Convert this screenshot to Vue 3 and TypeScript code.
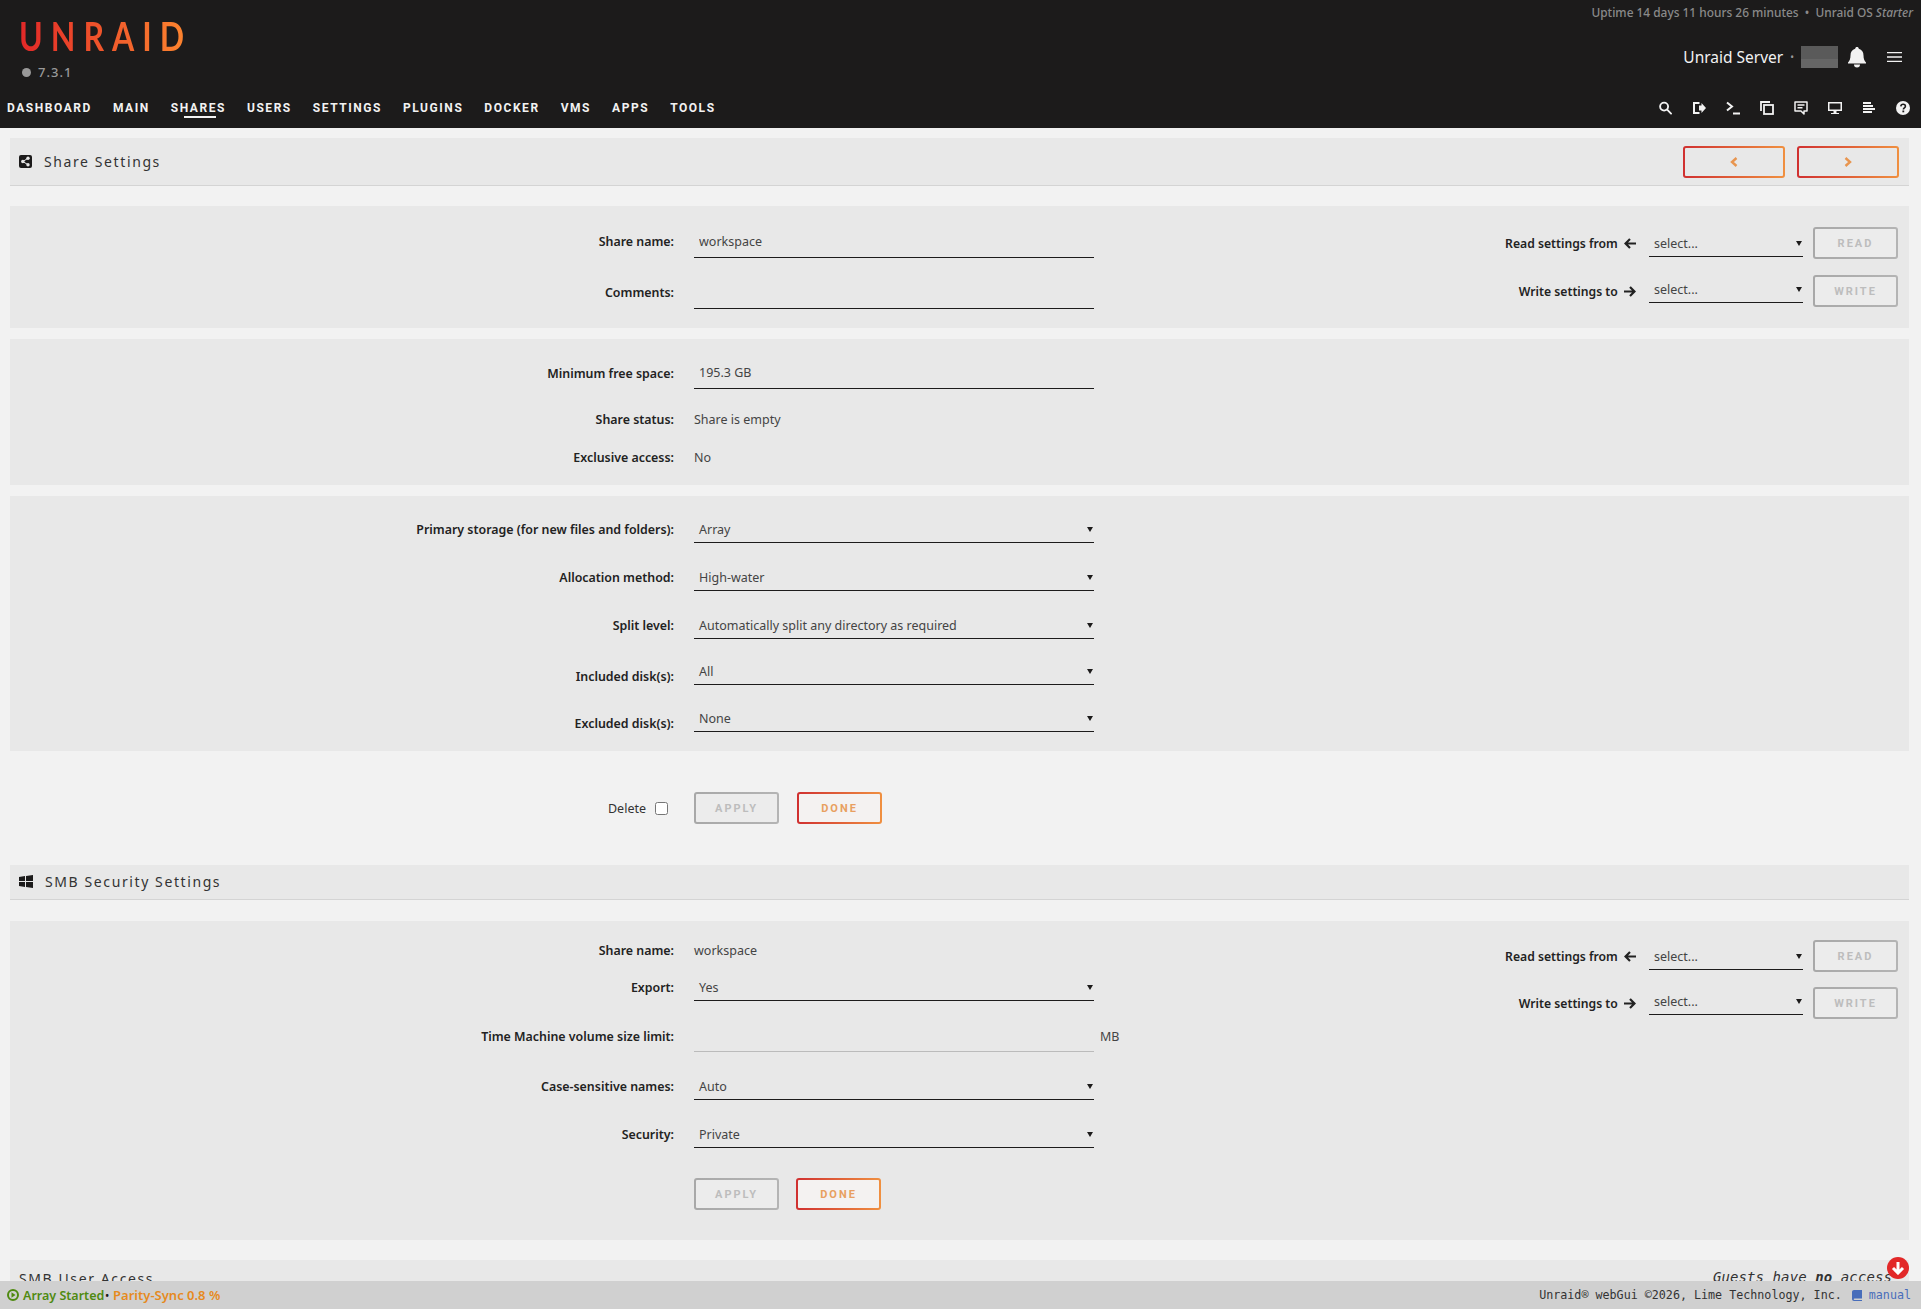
<script setup lang="ts">
interface Row {
  label: string
  kind: 'input' | 'select' | 'text'
  value: string
  h: number
  unit?: string
  raised?: boolean
}

const navItems = ['Dashboard', 'Main', 'Shares', 'Users', 'Settings', 'Plugins', 'Docker', 'VMs', 'Apps', 'Tools']

const nameRows: Row[] = [
  { label: 'Share name:', kind: 'input', value: 'workspace', h: 51 },
  { label: 'Comments:', kind: 'input', value: '', h: 51 },
]

const spaceRows: Row[] = [
  { label: 'Minimum free space:', kind: 'input', value: '195.3 GB', h: 52 },
  { label: 'Share status:', kind: 'text', value: 'Share is empty', h: 40 },
  { label: 'Exclusive access:', kind: 'text', value: 'No', h: 36 },
]

const storageRows: Row[] = [
  { label: 'Primary storage (for new files and folders):', kind: 'select', value: 'Array', h: 48 },
  { label: 'Allocation method:', kind: 'select', value: 'High-water', h: 48 },
  { label: 'Split level:', kind: 'select', value: 'Automatically split any directory as required', h: 48 },
  { label: 'Included disk(s):', kind: 'select', value: 'All', h: 54, raised: true },
  { label: 'Excluded disk(s):', kind: 'select', value: 'None', h: 40, raised: true },
]

const smbRows: Row[] = [
  { label: 'Share name:', kind: 'text', value: 'workspace', h: 34 },
  { label: 'Export:', kind: 'select', value: 'Yes', h: 40 },
  { label: 'Time Machine volume size limit:', kind: 'input', value: '', h: 58, unit: 'MB' },
  { label: 'Case-sensitive names:', kind: 'select', value: 'Auto', h: 42 },
  { label: 'Security:', kind: 'select', value: 'Private', h: 54 },
]

const panels = [
  { rows: nameRows, copy: true, cls: 'panel-name' },
  { rows: spaceRows, copy: false, cls: 'panel-space' },
  { rows: storageRows, copy: false, cls: 'panel-storage' },
]
</script>

<template>
  <div class="page">
    <header class="top">
      <div class="top-main">
        <div class="brand">
          <div class="logo">UNRAID</div>
          <div class="version"><span class="version-dot"></span>7.3.1</div>
        </div>
        <div class="top-right">
          <div class="uptime">Uptime 14 days 11 hours 26 minutes &nbsp;•&nbsp; Unraid OS <em>Starter</em></div>
          <div class="server">
            <span class="server-name">Unraid Server</span>
            <span class="server-dot">•</span>
            <span class="server-ip"></span>
            <svg class="bell" width="18" height="21" viewBox="0 0 18 21" fill="#f2f2f2">
              <path d="M9 0c1 0 1.700.7 1.800 1.700C14 2.500 15.500 5 15.500 8.500c0 3.500 1 5.300 2.500 7v1H0v-1c1.500-1.700 2.500-3.500 2.500-7C2.500 5 4 2.500 7.200 1.700 7.300.7 8 0 9 0z" />
              <path d="M6 17.500h6a3 3 0 0 1-6 0z" />
            </svg>
            <svg class="burger" width="15" height="10" viewBox="0 0 15 10" stroke="#f2f2f2" stroke-width="1.300">
              <path d="M0 .7h15M0 5h15M0 9.300h15" />
            </svg>
          </div>
        </div>
      </div>
      <div class="top-nav">
        <nav class="nav">
          <a v-for="item in navItems" :key="item" :class="['nav-item', { active: item === 'Shares' }]">{{ item }}</a>
        </nav>
        <div class="tools">
          <svg width="13" height="14" viewBox="0 0 14 14" fill="none" stroke="#f2f2f2" stroke-width="2"><circle cx="5.500" cy="5.500" r="4.300" /><path d="M8.800 8.800 13 13" stroke-linecap="round" /></svg>
          <svg width="14" height="14" viewBox="0 0 14 14" fill="#f2f2f2"><path d="M1 1h6.500v2H3v8h4.500v2H1z" /><path d="M7 4.500h2.500V2L14 7l-4.500 5V9.500H7z" /></svg>
          <svg width="14" height="14" viewBox="0 0 14 14" fill="none" stroke="#f2f2f2" stroke-width="2"><path d="m1 1.500 5 4-5 4" /><path d="M7 12.500h7" /></svg>
          <svg width="14" height="14" viewBox="0 0 14 14" fill="none" stroke="#f2f2f2" stroke-width="1.800"><path d="M1 10V1h9" /><rect x="4" y="4" width="9" height="9" /></svg>
          <svg width="14" height="14" viewBox="0 0 14 14" fill="none" stroke="#f2f2f2" stroke-width="1.500"><path d="M1 1h12v9h-3v3l-3-3H1z" stroke-linejoin="round" /><path d="M3.500 4h7M3.500 6.800h5" /></svg>
          <svg width="14" height="14" viewBox="0 0 14 14" fill="#f2f2f2"><path d="M0 1h14v9H8.500v2H11v1H3v-1h2.500v-2H0zm1.500 1.500v6h11v-6z" fill-rule="evenodd" /></svg>
          <svg width="14" height="14" viewBox="0 0 14 14" fill="#f2f2f2"><path d="M1 1h8v2H1zM1 4h10v2H1zM1 7h12v2H1zM1 10h9v2H1z" /></svg>
          <svg width="14" height="14" viewBox="0 0 14 14"><circle cx="7" cy="7" r="7" fill="#f2f2f2" /><path d="M4.800 5.300C5 3.900 6 3.300 7.100 3.300c1.300 0 2.300.8 2.300 2 0 1.700-2 1.600-2 3.200" fill="none" stroke="#1c1b1b" stroke-width="1.600" /><rect x="6.400" y="9.500" width="1.800" height="1.800" fill="#1c1b1b" /></svg>
        </div>
      </div>
    </header>

    <main class="content">
      <section class="title title-first">
        <span class="title-text">
          <svg width="13" height="13" viewBox="0 0 13 13"><rect width="13" height="13" rx="2" fill="#1c1b1b" /><circle cx="9" cy="3.300" r="1.700" fill="#e8e8e8" /><circle cx="9" cy="9.700" r="1.700" fill="#e8e8e8" /><circle cx="3.800" cy="6.500" r="1.700" fill="#e8e8e8" /><path d="M9 3.300 3.800 6.500 9 9.700" stroke="#e8e8e8" fill="none" /></svg>
          Share Settings
        </span>
        <span class="title-buttons">
          <button class="btn btn-page">
            <svg width="8" height="10" viewBox="0 0 8 10" fill="none" stroke="#e8954f" stroke-width="2.400"><path d="M6.500 1 2 5l4.500 4" /></svg>
          </button>
          <button class="btn btn-page">
            <svg width="8" height="10" viewBox="0 0 8 10" fill="none" stroke="#e8954f" stroke-width="2.400"><path d="M1.500 1 6 5 1.500 9" /></svg>
          </button>
        </span>
      </section>

      <section v-for="panel in panels" :key="panel.cls" :class="['panel', panel.cls]">
        <div class="form">
          <div v-for="row in panel.rows" :key="row.label" class="row" :style="{ height: row.h + 'px' }">
            <label class="row-label">{{ row.label }}</label>
            <div v-if="row.kind === 'text'" class="row-text">{{ row.value }}</div>
            <input v-else-if="row.kind === 'input'" class="field field-input" type="text" :value="row.value" />
            <div v-else :class="['field', 'field-select', { raised: row.raised }]">{{ row.value }}</div>
          </div>
        </div>
        <div v-if="panel.copy" class="copy">
          <div class="copy-row">
            <span class="copy-label">Read settings from
              <svg width="12" height="11" viewBox="0 0 12 11" fill="none" stroke="#222" stroke-width="2.200"><path d="M6 1 1.500 5.500 6 10M2 5.500h10" /></svg>
            </span>
            <div class="field field-select copy-select">select...</div>
            <button class="btn btn-off btn-copy" disabled>Read</button>
          </div>
          <div class="copy-row">
            <span class="copy-label">Write settings to
              <svg width="12" height="11" viewBox="0 0 12 11" fill="none" stroke="#222" stroke-width="2.200"><path d="M6 1l4.500 4.500L6 10M0 5.500h10" /></svg>
            </span>
            <div class="field field-select copy-select raised-small">select...</div>
            <button class="btn btn-off btn-copy" disabled>Write</button>
          </div>
        </div>
      </section>

      <div class="actions">
        <label class="delete">Delete <input type="checkbox" /></label>
        <div class="action-btns">
          <button class="btn btn-off btn-action" disabled>Apply</button>
          <button class="btn btn-on btn-action">Done</button>
        </div>
      </div>

      <section class="title title-smb">
        <span class="title-text">
          <svg width="14" height="13" viewBox="0 0 14 13" fill="#1c1b1b"><path d="M0 2 6 1v5H0zM7 .9 14 0v6H7zM0 7h6v5l-6-1zM7 7h7v6l-7-1z" /></svg>
          SMB Security Settings
        </span>
      </section>

      <section class="panel panel-smb">
        <div class="form">
          <div v-for="row in smbRows" :key="row.label" class="row" :style="{ height: row.h + 'px' }">
            <label class="row-label">{{ row.label }}</label>
            <div v-if="row.kind === 'text'" class="row-text">{{ row.value }}</div>
            <input v-else-if="row.kind === 'input'" class="field field-input field-faint" type="text" :value="row.value" />
            <div v-else class="field field-select">{{ row.value }}</div>
            <span v-if="row.unit" class="unit">{{ row.unit }}</span>
          </div>
          <div class="smb-actions">
            <button class="btn btn-off btn-action" disabled>Apply</button>
            <button class="btn btn-on btn-action">Done</button>
          </div>
        </div>
        <div class="copy copy-smb">
          <div class="copy-row">
            <span class="copy-label">Read settings from
              <svg width="12" height="11" viewBox="0 0 12 11" fill="none" stroke="#222" stroke-width="2.200"><path d="M6 1 1.500 5.500 6 10M2 5.500h10" /></svg>
            </span>
            <div class="field field-select copy-select">select...</div>
            <button class="btn btn-off btn-copy" disabled>Read</button>
          </div>
          <div class="copy-row">
            <span class="copy-label">Write settings to
              <svg width="12" height="11" viewBox="0 0 12 11" fill="none" stroke="#222" stroke-width="2.200"><path d="M6 1l4.500 4.500L6 10M0 5.500h10" /></svg>
            </span>
            <div class="field field-select copy-select raised-small">select...</div>
            <button class="btn btn-off btn-copy" disabled>Write</button>
          </div>
        </div>
      </section>

      <section class="panel-next">
        <span class="next-title">SMB User Access</span>
        <span class="next-note">Guests have <b>no</b> access</span>
      </section>
    </main>

    <div class="scroll-down">
      <svg width="14" height="14" viewBox="0 0 14 14" fill="none" stroke="#fff" stroke-width="3"><path d="M7 1v10M2 7l5 5 5-5" /></svg>
    </div>

    <footer class="footer">
      <div class="footer-left">
        <svg width="12" height="12" viewBox="0 0 12 12"><circle cx="6" cy="6" r="5" fill="none" stroke="#4f8a10" stroke-width="2" /><path d="M4.500 3.300 8.500 6l-4 2.700z" fill="#4f8a10" /></svg>
        <span class="array-ok">Array Started</span><span class="footer-dot">•</span>
        <span class="parity">Parity-Sync 0.8 %</span>
      </div>
      <div class="footer-right">
        <span>Unraid® webGui ©2026, Lime Technology, Inc.</span>
        <a class="manual">
          <svg width="10" height="11" viewBox="0 0 10 11" fill="#486dba"><path d="M2 0h8v8.500H2.500c-.5 0-.8.3-.8.700s.3.800.8.800H10v1H2C.9 11 0 10.200 0 9V2C0 .9.900 0 2 0z" /></svg>
          manual
        </a>
      </div>
    </footer>
  </div>
</template>

<style>
html,
body {
  margin: 0;
  height: 100%;
  overflow: hidden;
  background: #f2f2f2;
}
</style>

<style scoped>
.page {
  font-family: "Noto Sans", Roboto, sans-serif;
  font-size: 12.5px;
  color: #1c1b1b;
  height: 1309px;
  overflow: hidden;
  position: relative;
}

/* header */
.top {
  height: 128px;
  background: #1c1b1b;
  display: flex;
  flex-direction: column;
}

.top-main {
  display: flex;
  justify-content: space-between;
  height: 95px;
}

.brand {
  padding: 15px 0 0 19px;
}

.logo {
  font-family: Lato, sans-serif;
  font-size: 40px;
  font-weight: 700;
  line-height: 42px;
  letter-spacing: 10px;
  width: 226px;
  transform: scaleX(0.8);
  transform-origin: left;
  background: linear-gradient(90deg, #e22828, #ff8c2f);
  -webkit-background-clip: text;
  background-clip: text;
  color: transparent;
}

.version {
  display: flex;
  align-items: center;
  gap: 7px;
  margin: 6px 0 0 3px;
  color: #999;
  font-size: 13px;
  font-weight: 500;
  letter-spacing: 1px;
}

.version-dot {
  width: 9px;
  height: 9px;
  border-radius: 50%;
  background: #999;
}

.top-right {
  display: flex;
  flex-direction: column;
  align-items: flex-end;
  padding: 5px 8px 0 0;
}

.uptime {
  font-size: 11.9px;
  line-height: 15px;
  color: #8a8a8a;
  font-weight: 500;
}

.server {
  display: flex;
  align-items: center;
  margin-top: 24px;
  padding-right: 11px;
  height: 26px;
}

.server-name {
  font-size: 15.5px;
  color: #f2f2f2;
}

.server-dot {
  color: #999;
  font-size: 10px;
  margin: 0 7px;
}

.server-ip {
  width: 37px;
  height: 22px;
  background: linear-gradient(#5a5a5a 0 60%, #666 60%);
}

.bell {
  margin-left: 10px;
}

.burger {
  margin-left: 21px;
}

.top-nav {
  display: flex;
  justify-content: space-between;
  align-items: center;
  height: 26px;
}

.nav {
  display: flex;
  gap: 21px;
  padding-left: 7px;
}

.nav-item {
  position: relative;
  font-family: Roboto, sans-serif;
  font-size: 12px;
  font-weight: 700;
  letter-spacing: 1.55px;
  text-transform: uppercase;
  color: #f2f2f2;
}

.nav-item.active::after {
  content: "";
  position: absolute;
  left: 13px;
  right: 10px;
  bottom: -3px;
  height: 2px;
  background: #f2f2f2;
}

.tools {
  display: flex;
  gap: 20px;
  padding-right: 11px;
}

/* sections */
.content {
  padding: 10px 12px 0 10px;
}

.title {
  display: flex;
  justify-content: space-between;
  align-items: center;
  background: #e8e8e8;
  border-bottom: 1px solid #d4d4d4;
  box-sizing: border-box;
  padding: 0 10px 0 9px;
}

.title-first {
  height: 48px;
  margin-bottom: 20px;
}

.title-smb {
  height: 35px;
  padding-bottom: 2px;
  margin-bottom: 21px;
}

.title-text {
  display: flex;
  align-items: center;
  gap: 12px;
  font-size: 14px;
  letter-spacing: 1.6px;
  color: #333;
}

.title-buttons {
  display: flex;
  gap: 12px;
}

.panel {
  display: flex;
  background: #e8e8e8;
  margin-bottom: 11px;
  padding-right: 11px;
  box-sizing: border-box;
}

.panel-name {
  height: 122px;
  padding-top: 10px;
}

.panel-space {
  height: 146px;
  padding-top: 8px;
}

.panel-storage {
  height: 255px;
  padding-top: 9px;
  margin-bottom: 41px;
}

.panel-smb {
  height: 319px;
  padding-top: 12px;
  margin-bottom: 20px;
}

.form {
  flex: 1;
}

.row {
  display: flex;
  align-items: center;
}

.row-label {
  width: 664px;
  text-align: right;
  font-size: 12.4px;
  font-weight: 600;
  margin-right: 20px;
  flex-shrink: 0;
  color: #222;
}

.row-text {
  color: #444;
}

.field {
  box-sizing: border-box;
  width: 400px;
  border: 0;
  border-bottom: 1px solid #1c1b1b;
  background: transparent;
  font: inherit;
  color: #444;
  padding: 0 5px;
  outline: none;
}

.field-input {
  height: 32px;
}

.field-faint {
  border-bottom-color: #bbb;
}

.field-select {
  position: relative;
  height: 28px;
  line-height: 30px;
}

.field-select::after {
  content: "";
  position: absolute;
  right: 1px;
  top: 12px;
  border: 3px solid transparent;
  border-top: 5px solid #1c1b1b;
  border-bottom: 0;
}

.raised {
  margin-bottom: 10px;
}

.raised-small {
  margin-bottom: 4px;
}

.unit {
  margin-left: 6px;
  color: #444;
}

/* read / write block */
.copy {
  display: flex;
  flex-direction: column;
  gap: 16px;
  padding-top: 11px;
}

.copy-smb {
  padding-top: 7px;
  gap: 15px;
}

.copy-row {
  display: flex;
  align-items: center;
  height: 32px;
}

.copy-label {
  font-size: 12.2px;
  font-weight: 600;
  color: #222;
  margin-right: 13px;
  margin-left: auto;
}

.copy-label svg {
  margin-left: 3px;
  vertical-align: -1px;
}

.copy-select {
  width: 154px;
  margin-right: 10px;
}

/* buttons */
.btn {
  box-sizing: border-box;
  border: 2px solid transparent;
  border-radius: 3px;
  font-family: Roboto, sans-serif;
  font-size: 11px;
  font-weight: 700;
  letter-spacing: 2px;
  text-transform: uppercase;
  padding: 0;
  cursor: pointer;
}

.btn-off {
  background: linear-gradient(#ececec, #ececec) padding-box, linear-gradient(90deg, #a8a8a8, #b4b4b4) border-box;
  color: #bdbdbd;
}

.btn-on {
  color: #e8a060;
  background: linear-gradient(#f4f2f1, #f4f2f1) padding-box, linear-gradient(90deg, #d03030, #f09040) border-box;
}

.btn-page {
  width: 102px;
  height: 32px;
  display: flex;
  align-items: center;
  justify-content: center;
  background: linear-gradient(#e8e8e8, #e8e8e8) padding-box, linear-gradient(90deg, #d03030, #f09040) border-box;
}

.btn-action {
  width: 85px;
  height: 32px;
}

.btn-copy {
  width: 85px;
  height: 32px;
}

/* actions */
.actions {
  display: flex;
  align-items: center;
  height: 32px;
  margin-bottom: 41px;
}

.delete {
  display: flex;
  align-items: center;
  justify-content: flex-end;
  gap: 9px;
  width: 658px;
  margin-right: 26px;
  color: #333;
}

.delete input {
  margin: 0;
  width: 13px;
  height: 13px;
}

.action-btns,
.smb-actions {
  display: flex;
  gap: 18px;
}

.smb-actions {
  margin: 17px 0 0 684px;
  gap: 17px;
}

/* next section, cut by the footer */
.panel-next {
  display: flex;
  justify-content: space-between;
  background: #e8e8e8;
  height: 60px;
  padding: 9px 17px 0 9px;
  font-size: 14px;
  letter-spacing: 1.6px;
  color: #333;
}

.next-note {
  font-family: "DejaVu Sans Mono", monospace;
  font-style: italic;
  letter-spacing: 0.1px;
}

.scroll-down {
  position: absolute;
  left: 1887px;
  top: 1257px;
  width: 22px;
  height: 22px;
  border-radius: 50%;
  background: #e22828;
  display: flex;
  align-items: center;
  justify-content: center;
  z-index: 2;
}

/* footer */
.footer {
  position: absolute;
  left: 0;
  right: 0;
  bottom: 0;
  height: 28px;
  background: #d0d0d0;
  display: flex;
  justify-content: space-between;
  align-items: center;
  padding: 0 10px 0 7px;
}

.footer-left {
  display: flex;
  align-items: center;
  font-weight: 600;
}

.array-ok {
  color: #4f8a10;
  margin-left: 4px;
}

.footer-dot {
  margin: 0 4px 0 1px;
  font-size: 10px;
}

.parity {
  color: #e68a1e;
  font-size: 13px;
}

.footer-right {
  display: flex;
  align-items: center;
  gap: 10px;
  font-family: "DejaVu Sans Mono", monospace;
  font-size: 11.7px;
  color: #333;
}

.manual {
  display: flex;
  align-items: center;
  gap: 7px;
  color: #486dba;
}
</style>
